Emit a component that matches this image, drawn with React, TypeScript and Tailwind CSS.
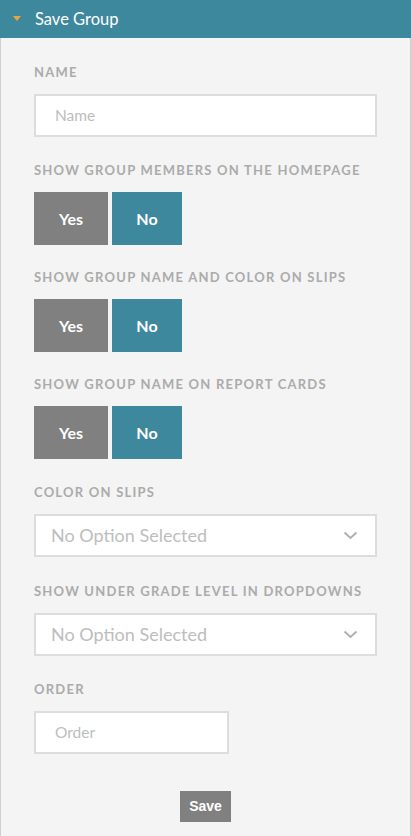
import React from "react";

const font = { fontFamily: "Lato, 'Open Sans', sans-serif" };

function Label({ children }: { children: React.ReactNode }) {
  return (
    <div className="text-[13px] leading-[16px] font-bold tracking-[0.095em] uppercase text-[#ababab] mb-[14px]">
      {children}
    </div>
  );
}

function YesNo() {
  return (
    <div className="flex gap-[4px]">
      <div className="w-[74px] h-[53px] bg-[#808080] text-white font-bold text-[16px] flex items-center justify-center">
        Yes
      </div>
      <div className="w-[70px] h-[53px] bg-[#3e889e] text-white font-bold text-[16px] flex items-center justify-center">
        No
      </div>
    </div>
  );
}

function SelectBox() {
  return (
    <div className="h-[43px] bg-white border-2 border-[#dddddd] flex items-center justify-between pl-[15px] pr-[17px]">
      <span className="text-[18px] text-[#bdbdbd]">No Option Selected</span>
      <svg width="15" height="9" viewBox="0 0 15 9" fill="none">
        <path d="M1.5 1.5 L7.5 7 L13.5 1.5" stroke="#b0b0b0" strokeWidth="2" />
      </svg>
    </div>
  );
}

export default function App() {
  return (
    <div className="w-[411px] min-h-[836px] bg-[#f4f4f4] flex flex-col" style={font}>
      <div className="h-[38px] bg-[#3e889e] flex items-center pl-[13px] shrink-0">
        <svg width="8" height="5" viewBox="0 0 8 5" className="mr-[14px] mt-[-1px]">
          <path d="M0 0 H8 L4 5 Z" fill="#eea23a" />
        </svg>
        <span className="text-white text-[16.5px]">Save Group</span>
      </div>
      <div className="flex-1 border-x border-[#cfcfcf] pl-[33px] pr-[33px] pt-[26px] pb-[20px] flex flex-col">
        <Label>Name</Label>
        <div className="h-[43px] bg-white border-2 border-[#dddddd] flex items-center pl-[19px]">
          <span className="text-[15.5px] text-[#bdbdbd]">Name</span>
        </div>

        <div className="mt-[25px]">
          <Label>Show group members on the homepage</Label>
          <YesNo />
        </div>
        <div className="mt-[24px]">
          <Label>Show group name and color on slips</Label>
          <YesNo />
        </div>
        <div className="mt-[24px]">
          <Label>Show group name on report cards</Label>
          <YesNo />
        </div>
        <div className="mt-[25px]">
          <Label>Color on slips</Label>
          <SelectBox />
        </div>
        <div className="mt-[26px]">
          <Label>Show under grade level in dropdowns</Label>
          <SelectBox />
        </div>
        <div className="mt-[25px]">
          <Label>Order</Label>
          <div className="w-[195px] h-[43px] bg-white border-2 border-[#dddddd] flex items-center pl-[19px]">
            <span className="text-[15.5px] text-[#bdbdbd]">Order</span>
          </div>
        </div>
        <div className="mt-[37px] flex justify-center">
          <div
            className="w-[51px] h-[31px] bg-[#808080] text-white font-bold text-[14px] flex items-center justify-center"
            style={{ fontFamily: "'Liberation Sans', Arial, sans-serif" }}
          >
            Save
          </div>
        </div>
      </div>
    </div>
  );
}
